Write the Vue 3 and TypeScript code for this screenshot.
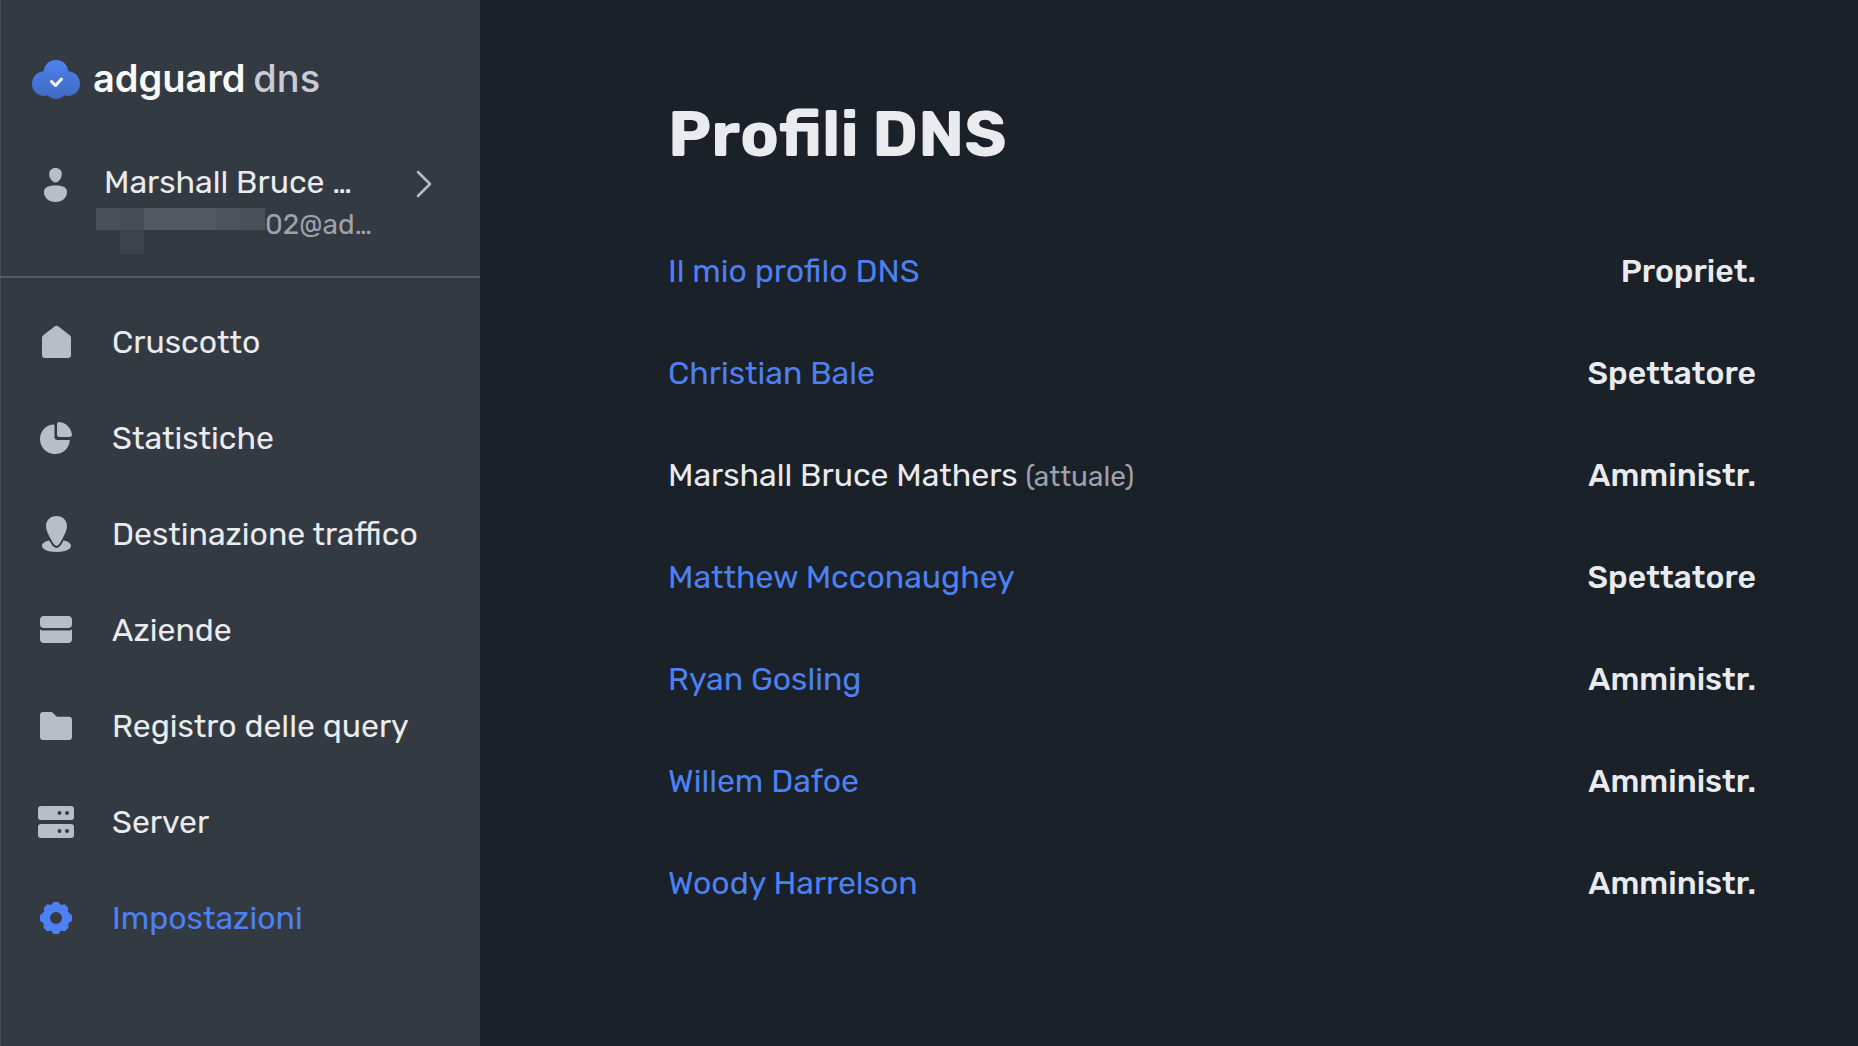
<script setup lang="ts">
interface NavItem {
  id: string
  label: string
  active?: boolean
}

interface Profile {
  name: string
  role: string
  current?: boolean
}

const navItems: NavItem[] = [
  { id: 'dashboard', label: 'Cruscotto' },
  { id: 'stats', label: 'Statistiche' },
  { id: 'traffic', label: 'Destinazione traffico' },
  { id: 'companies', label: 'Aziende' },
  { id: 'log', label: 'Registro delle query' },
  { id: 'servers', label: 'Server' },
  { id: 'settings', label: 'Impostazioni', active: true },
]

const profiles: Profile[] = [
  { name: 'Il mio profilo DNS', role: 'Propriet.' },
  { name: 'Christian Bale', role: 'Spettatore' },
  { name: 'Marshall Bruce Mathers', role: 'Amministr.', current: true },
  { name: 'Matthew Mcconaughey', role: 'Spettatore' },
  { name: 'Ryan Gosling', role: 'Amministr.' },
  { name: 'Willem Dafoe', role: 'Amministr.' },
  { name: 'Woody Harrelson', role: 'Amministr.' },
]
</script>

<template>
  <div class="layout">
    <aside class="sidebar">
      <a class="brand" href="#">
        <svg class="brand-mark" viewBox="0 0 48 40" aria-hidden="true">
          <defs>
            <linearGradient id="cloud" x1="0" y1="0" x2="0" y2="1">
              <stop offset="0" stop-color="#4d82ee" />
              <stop offset="1" stop-color="#4069c4" />
            </linearGradient>
          </defs>
          <path
            fill="url(#cloud)"
            d="M24 0c6.500 0 11.500 4.600 12.300 11.200C43.200 11.600 48 17 48 23.800 48 31 42.300 36.200 35 36c-1 0-2-.1-3-.4C30 37.800 27.300 39 24 39s-6-1.200-8-3.400c-1 .3-2 .4-3 .4C5.700 36.200 0 31 0 23.800 0 17 4.800 11.600 11.700 11.200 12.500 4.600 17.500 0 24 0z"
          />
          <path d="M19.500 21.500l4 4 6-6.500" fill="none" stroke="#fff" stroke-width="3" stroke-linecap="round" stroke-linejoin="round" />
        </svg>
        <span class="brand-text">
          <span class="brand-name">adguard</span>
          <span class="brand-product">dns</span>
        </span>
      </a>

      <button class="account" type="button">
        <svg class="icon" viewBox="0 0 48 48" aria-hidden="true">
          <path d="M23.500 7c3.800 0 6.300 2.500 6.300 6 0 4-3 8.500-6.300 8.500s-6.300-4.500-6.300-8.500c0-3.500 2.500-6 6.300-6z" />
          <path d="M12 31c0-4 3-6.500 11.500-6.500S35 27 35 31c0 6-5 10-11.500 10S12 37 12 31z" />
        </svg>
        <span class="account-text">
          <span class="account-name">Marshall Bruce …</span>
          <span class="account-mail">
            <svg class="mask" viewBox="0 0 169 46" aria-hidden="true">
              <path fill="#4a5058" d="M0 0h169v22H0z" />
              <path fill="#474d55" d="M24 0h24v22H24z" />
              <path fill="#525860" d="M48 0h72v22H48z" />
              <path fill="#4d535b" d="M120 0h24v22h-24z" />
              <path fill="#3d434b" d="M24 22h24v24H24z" />
            </svg>
            <span>02@ad…</span>
          </span>
        </span>
        <svg class="chevron" viewBox="0 0 16 28" aria-hidden="true">
          <path d="M2 2l12 12L2 26" fill="none" stroke="#b9bdc7" stroke-width="2.500" stroke-linecap="round" stroke-linejoin="round" />
        </svg>
      </button>

      <nav class="nav" aria-label="Menu">
        <a v-for="item in navItems" :key="item.id" href="#" class="nav-link" :class="{ active: item.active }">
          <svg class="icon" viewBox="0 0 48 48" aria-hidden="true">
            <path
              v-if="item.id === 'dashboard'"
              d="M22.200 8.800a3.600 3.600 0 0 1 4.600 0L37.500 17c1 .8 1.500 1.800 1.500 3v17a3 3 0 0 1-3 3H13a3 3 0 0 1-3-3V20c0-1.200.5-2.200 1.500-3z"
            />
            <template v-else-if="item.id === 'stats'">
              <path d="M22.500 12.200V23a3 3 0 0 0 3 3h12.300c-.3 7.900-6.600 14-14.600 14C14.700 40 8 33.600 8 25.200 8 17.200 14 11 20.800 10.500c1.200-.1 1.700.6 1.700 1.700z" />
              <path d="M25 10.200C25 8.800 26 8 27.500 8.100 34 8.700 39 13.800 39.900 20.500 40 22 39.200 23 37.800 23H27.500a2.500 2.500 0 0 1-2.500-2.500z" />
            </template>
            <template v-else-if="item.id === 'traffic'">
              <path d="M24.500 6C31 6 35 10.500 35 16.200c0 3.800-2.500 8.800-5 13.300-1.500 2.800-3 5.500-5.500 6.500-2.500-1-4-3.700-5.500-6.500-2.500-4.500-5-9.500-5-13.300C14 10.500 18 6 24.500 6z" />
              <path d="M17.500 30.500C19 33.500 21 37.500 24.500 38c3.500-.5 5.500-4.500 7-7.500 4.500.7 7.500 2.700 7.500 5.300 0 3.700-6 6.200-14.500 6.200S10 39.500 10 35.800c0-2.600 3-4.600 7.500-5.300z" />
            </template>
            <template v-else-if="item.id === 'companies'">
              <path d="M12 10h24a4 4 0 0 1 4 4v4a4 4 0 0 1-4 4H12a4 4 0 0 1-4-4v-4a4 4 0 0 1 4-4z" />
              <path d="M8 23.500c1 .6 2 .9 3 .9h26c1 0 2-.3 3-.9V33a4 4 0 0 1-4 4H12a4 4 0 0 1-4-4z" />
            </template>
            <path
              v-else-if="item.id === 'log'"
              d="M11 10h7.500c1.200 0 2 .4 2.800 1.200l2.200 2.400c.8.900 1.500 1.200 2.700 1.200H37a3 3 0 0 1 3 3V35a3 3 0 0 1-3 3H11a3 3 0 0 1-3-3V13a3 3 0 0 1 3-3z"
            />
            <path
              v-else-if="item.id === 'servers'"
              fill-rule="evenodd"
              d="M9 8h30a3 3 0 0 1 3 3v8a3 3 0 0 1-3 3H9a3 3 0 0 1-3-3v-8a3 3 0 0 1 3-3zm0 18h30a3 3 0 0 1 3 3v8a3 3 0 0 1-3 3H9a3 3 0 0 1-3-3v-8a3 3 0 0 1 3-3zM25.500 15a2 2 0 1 0 4 0 2 2 0 1 0-4 0zm7.500 0a2 2 0 1 0 4 0 2 2 0 1 0-4 0zm-7.500 18a2 2 0 1 0 4 0 2 2 0 1 0-4 0zm7.500 0a2 2 0 1 0 4 0 2 2 0 1 0-4 0z"
            />
            <path
              v-else
              fill-rule="evenodd"
              d="M21.500 8h5l2 3 4-.8 3.800 3.500-.7 3.900 4.400 3.700v5.400l-3.700 2.800.2 4.200-3.500 3.500-4.200-.5L26.500 40h-5l-2.300-3.300-4.200.5-3.500-3.500.2-4.200L8 26.700v-5.400l4.400-3.700-.7-3.900 3.800-3.500 4 .8zM18 24a6 6 0 1 0 12 0 6 6 0 1 0-12 0z"
            />
          </svg>
          <span>{{ item.label }}</span>
        </a>
      </nav>
    </aside>

    <main class="content">
      <h1 class="title">Profili DNS</h1>
      <table class="profiles" aria-label="Profili DNS">
        <tbody>
          <tr v-for="profile in profiles" :key="profile.name">
            <td class="name">
              <template v-if="profile.current">{{ profile.name }} <span class="note">(attuale)</span></template>
              <a v-else href="#">{{ profile.name }}</a>
            </td>
            <td class="role">{{ profile.role }}</td>
          </tr>
        </tbody>
      </table>
    </main>
  </div>
</template>

<style>
body {
  margin: 0;
  background: #1b2129;
}
</style>

<style scoped>
.layout {
  display: flex;
  min-height: 100vh;
  background: #1b2129;
  color: #e9ebef;
  font-family: Rubik, Roboto, "Liberation Sans", sans-serif;
  font-size: 32px;
  line-height: 40px;
}

a {
  color: #4d80f0;
  text-decoration: none;
}

.sidebar {
  flex: none;
  width: 480px;
  background: #343a42;
  box-shadow: inset 1px 0 #474c54;
}

.brand {
  display: flex;
  align-items: center;
  height: 48px;
  padding: 56px 32px 40px;
}

.brand-mark {
  width: 48px;
  height: 40px;
  margin-right: 13px;
}

.brand-text {
  display: flex;
  gap: 8px;
  padding-bottom: 4px;
  font-family: Inter, "Liberation Sans", sans-serif;
  font-size: 38px;
}

.brand-name {
  color: #f9fafc;
  font-weight: 600;
}

.brand-product {
  color: #c9cbd6;
  font-weight: 500;
}

.account {
  display: flex;
  box-sizing: border-box;
  width: 100%;
  height: 134px;
  padding: 17px 48px 0 32px;
  border: 0;
  border-bottom: 2px solid #565c64;
  background: none;
  color: inherit;
  font: inherit;
  text-align: left;
}

.icon {
  flex: none;
  width: 48px;
  height: 48px;
  fill: #b9bdc7;
}

.account-text {
  display: flex;
  flex: 1;
  flex-direction: column;
  padding: 1px 0 0 16px;
}

.account-name {
  padding-left: 8px;
}

.account-mail {
  display: flex;
  align-items: flex-start;
  padding-top: 6px;
  color: #9ea2ab;
  font-size: 28px;
  line-height: 34px;
}

.mask {
  width: 169px;
  height: 46px;
}

.chevron {
  width: 16px;
  height: 28px;
  margin-top: 9px;
}

.nav {
  padding: 16px 0;
}

.nav-link {
  display: flex;
  align-items: center;
  gap: 32px;
  height: 96px;
  padding: 0 32px;
  color: #e9ebef;
}

.nav-link.active {
  color: #4d80f0;
}

.nav-link.active .icon {
  fill: #4d80f0;
}

.content {
  flex: 1;
  padding: 94px 102px 92px 188px;
}

.title {
  margin: 0 0 46px;
  font-size: 64px;
  font-weight: 700;
  line-height: 80px;
}

.profiles {
  width: 100%;
  border-collapse: collapse;
}

.profiles td {
  height: 102px;
  padding: 0;
}

.note {
  color: #9ea2ab;
  font-size: 28px;
  line-height: 32px;
}

.profiles .role {
  font-weight: 500;
  text-align: right;
}
</style>
